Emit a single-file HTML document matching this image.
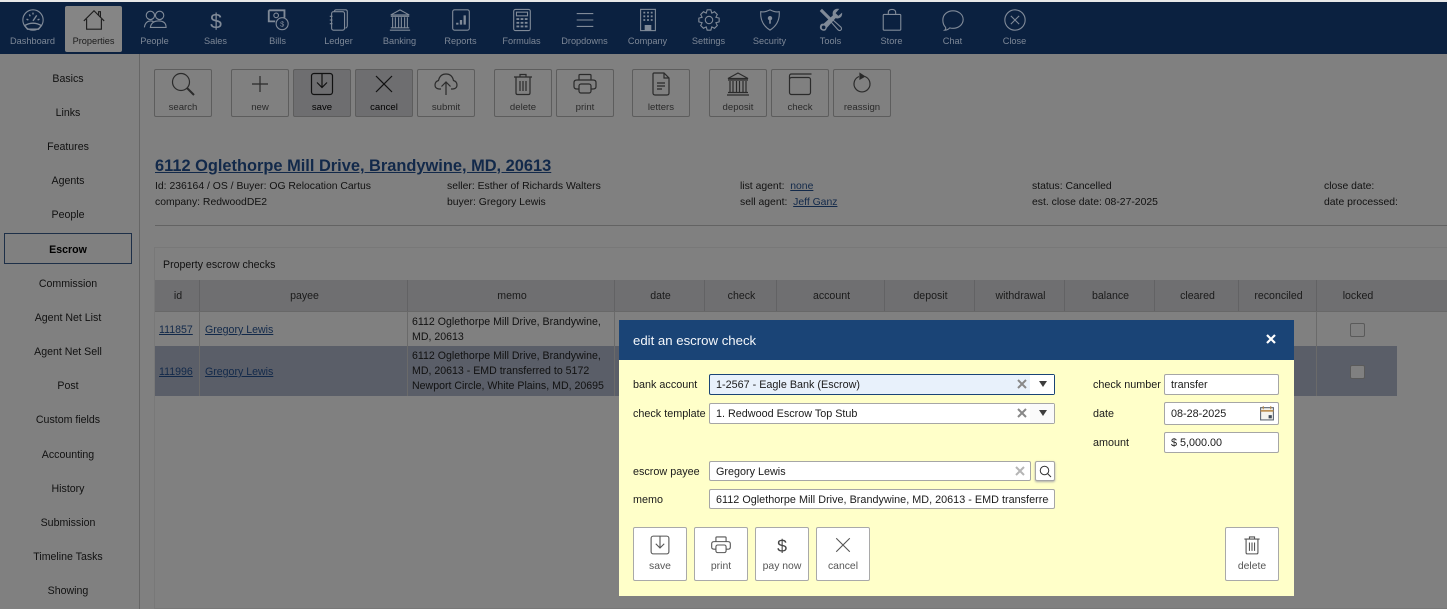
<!DOCTYPE html>
<html><head><meta charset="utf-8"><title>edit an escrow check</title>
<style>
*{box-sizing:border-box}
html,body{margin:0;padding:0}
body{width:1447px;height:609px;overflow:hidden;position:relative;background:#808080;font-family:"Liberation Sans",sans-serif;font-size:11px;color:#111}
.a{position:absolute;white-space:nowrap}
.top{position:absolute;left:0;top:0;width:1447px;height:2px;background:#e8e8e8}
.nav{position:absolute;left:0;top:2px;width:1447px;height:52px;background:#0b2140}
.ni{position:absolute;top:0;width:61px;height:52px;text-align:center;color:#7d8796;font-size:9.2px}
.ni svg{position:absolute;left:19px;top:6px;width:24px;height:24px;fill:none;stroke:#808a98;stroke-width:1.2}
.ni span{position:absolute;left:-5px;right:-5px;top:34px}
.side{position:absolute;left:0;top:54px;width:140px;height:555px;border-right:1px solid #666}
.si{position:absolute;left:0;width:136px;text-align:center;font-size:10.6px;color:#111}
.tb{position:absolute;top:69px;width:58px;height:48px;border:1px solid #5d5d5d;border-radius:2px;text-align:center;color:#2a2a2a;font-size:9.6px}
.tb.on{background:#6e6e70;color:#000}
.tb svg{position:absolute;left:15px;top:1px;width:26px;height:26px;fill:none;stroke:#2b2b2b;stroke-width:1.2}
.tb span{position:absolute;left:0;right:0;top:32px}
.info{font-size:10.4px;color:#111}
.info u{color:#12294a}
.th{position:absolute;top:280px;height:32px;background:#6f6f71;border-right:1px solid #626264;text-align:center;line-height:33px;font-size:10.6px;color:#1a1a1a;padding-left:2px}
.cell{position:absolute;border-right:1px solid #6a6a6a}
.txt{position:absolute;font-size:10.6px;line-height:15px;color:#111;white-space:nowrap}
.lnk{color:#12294a;text-decoration:underline;font-size:10.6px}
.modal{position:absolute;left:619px;top:320px;width:675px;height:276px;background:#ffffc9}
.mh{position:absolute;left:0;top:0;width:675px;height:40px;background:#1a4476;color:#f4f7fb;font-size:13.2px;line-height:41px;padding-left:14px}
.lb{position:absolute;font-size:10.8px;color:#1b1b1b;white-space:nowrap}
.in{position:absolute;background:#fff;border:1px solid #a6a6a6;border-radius:2px;font-size:10.8px;color:#1b1b1b;line-height:21px;padding-left:6px;white-space:nowrap;overflow:hidden}
.mb{position:absolute;top:207px;width:54px;height:54px;background:#fff;border:1px solid #a9a9a9;border-radius:2px;text-align:center;color:#555;font-size:10.4px}
.mb svg{position:absolute;left:15px;top:6px;width:22px;height:22px;fill:none;stroke:#555;stroke-width:1.3}
.mb span{position:absolute;left:0;right:0;top:33px}
</style></head><body>
<svg width="0" height="0" style="position:absolute"><defs>
<symbol id="save" viewBox="0 0 26 26"><rect x="2.500" y="2.500" width="21" height="21" rx="2.500"/><path d="M13 3v13M8 11.500l5 5 5-5"/></symbol>
<symbol id="x" viewBox="0 0 26 26"><path d="M5 5l16 16M21 5L5 21"/></symbol>
<symbol id="print" viewBox="0 0 26 26"><path d="M7 9V4.500q0-1 1-1h10q1 0 1 1V9M7 18H5q-3 0-3-2.500v-4Q2 9 5 9h16q3 0 3 2.500v4q0 2.500-3 2.500h-2"/><rect x="7" y="13" width="12" height="9" rx="2"/></symbol>
<symbol id="trash" viewBox="0 0 26 26"><path d="M4 6h18M10 6V3.500h6V6M6 6v16q0 1.500 1.500 1.500h11Q20 23.500 20 22V6M10 10v10M13 10v10M16 10v10"/></symbol>
<symbol id="bank" viewBox="0 0 26 26"><path d="M13 2L3 7.500h20zM3 9h20M5 10v11M8 10v11M11.500 10v11M14.500 10v11M18 10v11M21 10v11M3 21.500h20M2 24h22"/></symbol>
<symbol id="mag" viewBox="0 0 26 26"><circle cx="11" cy="11" r="8.500"/><path d="M17 17l7 7" stroke-width="2"/></symbol>
</defs></svg>

<div class="top"></div>
<div class="nav">
<div class="ni" style="left:65px;top:4px;width:57px;height:46px;background:#858585;border-radius:2px"></div>

<div class="ni" style="left:2px"><svg viewBox="0 0 26 26"><circle cx="13" cy="13" r="11"/><path d="M4 19q9-5 18 0l-3 4H7zM13 14l4-6M6 12l2 1M9 7l1 2M13 5v2M20 12l-2 1" stroke-width="1.500"/></svg><span>Dashboard</span></div>
<div class="ni" style="left:63px;color:#1c1c1c"><svg viewBox="0 0 26 26" style="stroke:#1c1c1c"><path d="M2 14L13 3l11 11M5 12v11h16V12M18 8V4h2v6"/></svg><span>Properties</span></div>
<div class="ni" style="left:124px"><svg viewBox="0 0 26 26"><circle cx="8" cy="8" r="4.500"/><circle cx="18" cy="8" r="4.500"/><path d="M1.500 21q1-7 7-7 2 0 3 1M8 21q1-7 9-7t8 7z"/></svg><span>People</span></div>
<div class="ni" style="left:185px"><svg viewBox="0 0 26 26"><text x="13" y="22" text-anchor="middle" font-family="Liberation Sans" font-size="23" fill="#808a98" stroke="none">$</text></svg><span>Sales</span></div>
<div class="ni" style="left:247px"><svg viewBox="0 0 26 26"><path d="M3 2.500h17v8M3 2.500v12h7" stroke-width="2"/><circle cx="11" cy="8" r="2.500"/><circle cx="17.500" cy="17" r="6.500"/><text x="17.500" y="20" text-anchor="middle" font-size="8" fill="#808a98" stroke="none" font-family="Liberation Sans">$</text></svg><span>Bills</span></div>
<div class="ni" style="left:308px"><svg viewBox="0 0 26 26"><rect x="5" y="4" width="14" height="20" rx="2"/><path d="M8 4q0-2 2-2h10q2 0 2 2v15q0 2-2 3M3 9h3M3 13h3M3 17h3"/></svg><span>Ledger</span></div>
<div class="ni" style="left:369px"><svg viewBox="0 0 26 26"><use href="#bank"/></svg><span>Banking</span></div>
<div class="ni" style="left:430px"><svg viewBox="0 0 26 26"><rect x="4" y="2" width="18" height="22" rx="2"/><path d="M9 18v-2M13 18v-5M17 18V8" stroke-width="2.500"/></svg><span>Reports</span></div>
<div class="ni" style="left:491px"><svg viewBox="0 0 26 26"><rect x="4" y="1.500" width="18" height="23" rx="2"/><rect x="7" y="4.500" width="12" height="4"/><path d="M7 12h3M11.500 12h3M16 12h3M7 16h3M11.500 16h3M16 16h3M7 20h3M11.500 20h3M16 20h3" stroke-width="2"/></svg><span>Formulas</span></div>
<div class="ni" style="left:554px"><svg viewBox="0 0 26 26"><path d="M4 6h18M4 13h18M4 20h18"/></svg><span>Dropdowns</span></div>
<div class="ni" style="left:617px"><svg viewBox="0 0 26 26"><rect x="5" y="1.500" width="16" height="23"/><path d="M8 5h2M12 5h2M16 5h2M8 9h2M12 9h2M16 9h2M8 13h2M12 13h2M16 13h2" stroke-width="2"/><rect x="10" y="19" width="6" height="5" fill="#808a98"/></svg><span>Company</span></div>
<div class="ni" style="left:678px"><svg viewBox="0 0 26 26"><circle cx="13" cy="13" r="4"/><path d="M11 2h4l1 3.500 3-1.500 3 3-1.500 3L24 11v4l-3.500 1 1.500 3-3 3-3-1.500L15 24h-4l-1-3.500L7 22l-3-3 1.500-3L2 15v-4l3.500-1L4 7l3-3 3 1.500z"/></svg><span>Settings</span></div>
<div class="ni" style="left:739px"><svg viewBox="0 0 26 26"><path d="M13 2q6 3 10 2 1 13-10 20Q2 17 3 4q4 1 10-2z"/><circle cx="13" cy="11" r="1.800" fill="#808a98"/><path d="M13 12v5" stroke-width="1.800"/></svg><span>Security</span></div>
<div class="ni" style="left:800px"><svg viewBox="0 0 26 26"><path d="M2 2l11 11" stroke-width="3.400"/><path d="M14 12l10 9q1 2-.5 3t-3-.5L12 14z"/><path d="M25 5l-4 3.500-3-3L22 1q-5-1-7 3-.5 2 0 4L5 17q-3.500-.5-4 3t3 4.500 4.500-3L18 11q3 1 5.500-1 2-2 1.500-5z" fill="#808a98" stroke="none"/><circle cx="5" cy="21" r="2" fill="#0b2140" stroke="none"/></svg><span>Tools</span></div>
<div class="ni" style="left:861px"><svg viewBox="0 0 26 26"><rect x="3.500" y="7" width="19" height="17" rx="1"/><path d="M9 7V5q0-3.500 4-3.500T17 5v2"/></svg><span>Store</span></div>
<div class="ni" style="left:922px"><svg viewBox="0 0 26 26"><path d="M5 21q-3-3-3-8C2 7 7 3 13 3s11 4 11 9.500S19 22 13 22q-2 0-3.500-.5Q7 24 4 24q1.500-1 1-3z"/></svg><span>Chat</span></div>
<div class="ni" style="left:984px"><svg viewBox="0 0 26 26"><circle cx="13" cy="13" r="11"/><path d="M8.500 8.500l9 9M17.500 8.500l-9 9"/></svg><span>Close</span></div>
</div>

<div class="side"></div>
<div class="si a" style="top:73px">Basics</div>
<div class="si a" style="top:107px">Links</div>
<div class="si a" style="top:141px">Features</div>
<div class="si a" style="top:175px">Agents</div>
<div class="si a" style="top:209px">People</div>
<div class="a" style="left:4px;top:233px;width:128px;height:31px;border:1px solid #1d2f48"></div>
<div class="si a" style="top:244px;font-weight:bold;color:#000">Escrow</div>
<div class="si a" style="top:278px">Commission</div>
<div class="si a" style="top:312px">Agent Net List</div>
<div class="si a" style="top:346px">Agent Net Sell</div>
<div class="si a" style="top:380px">Post</div>
<div class="si a" style="top:414px">Custom fields</div>
<div class="si a" style="top:449px">Accounting</div>
<div class="si a" style="top:483px">History</div>
<div class="si a" style="top:517px">Submission</div>
<div class="si a" style="top:551px">Timeline Tasks</div>
<div class="si a" style="top:585px">Showing</div>

<div class="tb" style="left:154px"><svg><use href="#mag"/></svg><span>search</span></div>
<div class="tb" style="left:231px"><svg viewBox="0 0 26 26"><path d="M13 5v16M5 13h16"/></svg><span>new</span></div>
<div class="tb on" style="left:293px"><svg style="stroke:#111"><use href="#save"/></svg><span>save</span></div>
<div class="tb on" style="left:355px"><svg style="stroke:#111"><use href="#x"/></svg><span>cancel</span></div>
<div class="tb" style="left:417px"><svg viewBox="0 0 26 26"><path d="M8 18H6q-4-.5-4-4 0-3.500 3.500-4.500Q7 3 13 3t7.500 6.500q3.500 1 3.500 4.500t-4 4h-2M13 24V11M8.500 15.500L13 11l4.500 4.500"/></svg><span>submit</span></div>
<div class="tb" style="left:494px"><svg><use href="#trash"/></svg><span>delete</span></div>
<div class="tb" style="left:556px"><svg><use href="#print"/></svg><span>print</span></div>
<div class="tb" style="left:632px"><svg viewBox="0 0 26 26"><path d="M6 2h10l5 5v15q0 2-2 2H7q-2 0-2-2V3q0-1 1-1zM16 2v5h5" /><path d="M9 12h8M9 15h8M9 18h5"/></svg><span>letters</span></div>
<div class="tb" style="left:709px"><svg><use href="#bank"/></svg><span>deposit</span></div>
<div class="tb" style="left:771px"><svg viewBox="0 0 26 26"><rect x="2.500" y="6.500" width="21" height="17" rx="2"/><path d="M2.500 8V5q0-2 2-2h20"/></svg><span>check</span></div>
<div class="tb" style="left:833px"><svg viewBox="0 0 26 26"><path d="M10 5.500a8 8 0 1 0 6 0"/><path d="M11 2.500l4.500 3-4.500 2.500z" fill="#2b2b2b"/></svg><span>reassign</span></div>

<div class="a" style="left:155px;top:157px;font-size:16.4px;font-weight:bold;color:#12294a;text-decoration:underline">6112 Oglethorpe Mill Drive, Brandywine, MD, 20613</div>
<div class="a info" style="left:155px;top:181px">Id: 236164 / OS / Buyer: OG Relocation Cartus</div>
<div class="a info" style="left:155px;top:197px">company: RedwoodDE2</div>
<div class="a info" style="left:447px;top:181px">seller: Esther of Richards Walters</div>
<div class="a info" style="left:447px;top:197px">buyer: Gregory Lewis</div>
<div class="a info" style="left:740px;top:181px">list agent: &nbsp;<u>none</u></div>
<div class="a info" style="left:740px;top:197px">sell agent: &nbsp;<u>Jeff Ganz</u></div>
<div class="a info" style="left:1032px;top:181px">status: Cancelled</div>
<div class="a info" style="left:1032px;top:197px">est. close date: 08-27-2025</div>
<div class="a info" style="left:1324px;top:181px">close date:</div>
<div class="a info" style="left:1324px;top:197px">date processed:</div>
<div class="a" style="left:155px;top:225px;width:1292px;height:1px;background:#636363"></div>

<div class="a" style="left:154px;top:247px;width:1293px;height:362px;border:1px solid #787878;border-right:0"></div>
<div class="a" style="left:163px;top:259px;font-size:10.6px;color:#111">Property escrow checks</div>

<div class="th" style="left:155px;width:45px">id</div>
<div class="th" style="left:200px;width:208px">payee</div>
<div class="th" style="left:408px;width:207px">memo</div>
<div class="th" style="left:615px;width:90px">date</div>
<div class="th" style="left:705px;width:72px">check</div>
<div class="th" style="left:777px;width:108px">account</div>
<div class="th" style="left:885px;width:90px">deposit</div>
<div class="th" style="left:975px;width:90px">withdrawal</div>
<div class="th" style="left:1065px;width:90px">balance</div>
<div class="th" style="left:1155px;width:84px">cleared</div>
<div class="th" style="left:1239px;width:78px">reconciled</div>
<div class="th" style="left:1317px;width:80px;border-right:0">locked</div>
<div class="a" style="left:1397px;top:280px;width:50px;height:32px;background:#6f6f71"></div>
<div class="a" style="left:155px;top:311px;width:1292px;height:1px;background:#686868"></div>

<div class="a" style="left:155px;top:346px;width:1242px;height:50px;background:#5a5e68"></div>
<div class="cell" style="left:155px;top:312px;width:45px;height:84px"></div>
<div class="cell" style="left:200px;top:312px;width:208px;height:84px"></div>
<div class="cell" style="left:408px;top:312px;width:207px;height:84px"></div>
<div class="cell" style="left:1239px;top:312px;width:78px;height:84px"></div>

<div class="a lnk" style="left:159px;top:324px">111857</div>
<div class="a lnk" style="left:205px;top:324px">Gregory Lewis</div>
<div class="txt" style="left:412px;top:315px">6112 Oglethorpe Mill Drive, Brandywine,<br>MD, 20613</div>
<div class="a lnk" style="left:159px;top:366px">111996</div>
<div class="a lnk" style="left:205px;top:366px">Gregory Lewis</div>
<div class="txt" style="left:412px;top:349px">6112 Oglethorpe Mill Drive, Brandywine,<br>MD, 20613 - EMD transferred to 5172<br>Newport Circle, White Plains, MD, 20695</div>
<div class="a" style="left:1350px;top:323px;width:15px;height:14px;border:1px solid #5a5a5a;border-radius:2px;background:#808080"></div>
<div class="a" style="left:1350px;top:365px;width:15px;height:14px;border:1px solid #5a5a5a;border-radius:2px;background:#808080"></div>

<div class="modal">
<div class="mh">edit an escrow check</div>
<svg class="a" style="left:646px;top:13px" width="12" height="12" viewBox="0 0 12 12"><path d="M2 2l8 8M10 2l-8 8" stroke="#fff" stroke-width="2.200"/></svg>

<div class="lb" style="left:14px;top:59px">bank account</div>
<div class="in" style="left:90px;top:54px;width:346px;height:21px;background:#e8f1fb;border-color:#1a4476;line-height:20px">1-2567 - Eagle Bank (Escrow)</div>
<div class="a" style="left:411px;top:55px;width:24px;height:19px;background:#fff"></div>
<svg class="a" style="left:398px;top:59px" width="10" height="10" viewBox="0 0 10 10"><path d="M1 1l8 8M9 1L1 9" stroke="#888" stroke-width="2"/></svg>
<svg class="a" style="left:419px;top:61px" width="10" height="7" viewBox="0 0 10 7"><path d="M1 0h8L5 6z" fill="#3d3d3d"/></svg>

<div class="lb" style="left:14px;top:88px">check template</div>
<div class="in" style="left:90px;top:83px;width:346px;height:21px;line-height:20px">1. Redwood Escrow Top Stub</div>
<div class="a" style="left:411px;top:84px;width:24px;height:19px;background:#fafafa"></div>
<svg class="a" style="left:398px;top:88px" width="10" height="10" viewBox="0 0 10 10"><path d="M1 1l8 8M9 1L1 9" stroke="#888" stroke-width="2"/></svg>
<svg class="a" style="left:419px;top:90px" width="10" height="7" viewBox="0 0 10 7"><path d="M1 0h8L5 6z" fill="#3d3d3d"/></svg>

<div class="lb" style="left:14px;top:146px">escrow payee</div>
<div class="in" style="left:90px;top:141px;width:322px;height:20px;line-height:20px">Gregory Lewis</div>
<svg class="a" style="left:396px;top:146px" width="10" height="10" viewBox="0 0 10 10"><path d="M1 1l8 8M9 1L1 9" stroke="#b5b5b5" stroke-width="2"/></svg>
<div class="in" style="left:416px;top:141px;width:20px;height:20px;padding:0;box-shadow:0 1px 2px #aaa"><svg class="a" style="left:3px;top:3px;fill:none;stroke:#333;stroke-width:2" width="13" height="13" viewBox="0 0 26 26"><use href="#mag"/></svg></div>

<div class="lb" style="left:14px;top:174px">memo</div>
<div class="in" style="left:90px;top:169px;width:346px;height:20px;line-height:20px;padding-right:0"><span style="display:block;width:333px;overflow:hidden;letter-spacing:.02px">6112 Oglethorpe Mill Drive, Brandywine, MD, 20613 - EMD transferred</span></div>

<div class="lb" style="left:474px;top:59px">check number</div>
<div class="in" style="left:545px;top:54px;width:115px;height:21px;line-height:20px">transfer</div>
<div class="lb" style="left:474px;top:88px">date</div>
<div class="in" style="left:545px;top:82px;width:115px;height:23px;line-height:22px">08-28-2025</div>
<svg class="a" style="left:640px;top:85px" width="16" height="16" viewBox="0 0 15 15"><rect x="1.500" y="2.500" width="12" height="11.500" fill="#f4f4ee" stroke="#5a6470"/><path d="M1.500 5.500h12" stroke="#b98a4a" stroke-width="1.500"/><path d="M4 1v3M11 1v3" stroke="#b98a4a"/><rect x="9" y="9.500" width="3" height="3" fill="#3f4a58"/></svg>
<div class="lb" style="left:474px;top:117px">amount</div>
<div class="in" style="left:545px;top:112px;width:115px;height:21px;line-height:20px">$ 5,000.00</div>

<div class="mb" style="left:14px"><svg><use href="#save"/></svg><span>save</span></div>
<div class="mb" style="left:75px"><svg><use href="#print"/></svg><span>print</span></div>
<div class="mb" style="left:136px"><svg viewBox="0 0 26 26"><text x="13" y="21" text-anchor="middle" font-family="Liberation Sans" font-size="21" fill="#444" stroke="none">$</text></svg><span>pay now</span></div>
<div class="mb" style="left:197px"><svg><use href="#x"/></svg><span>cancel</span></div>
<div class="mb" style="left:606px"><svg><use href="#trash"/></svg><span>delete</span></div>
</div>
</body></html>
